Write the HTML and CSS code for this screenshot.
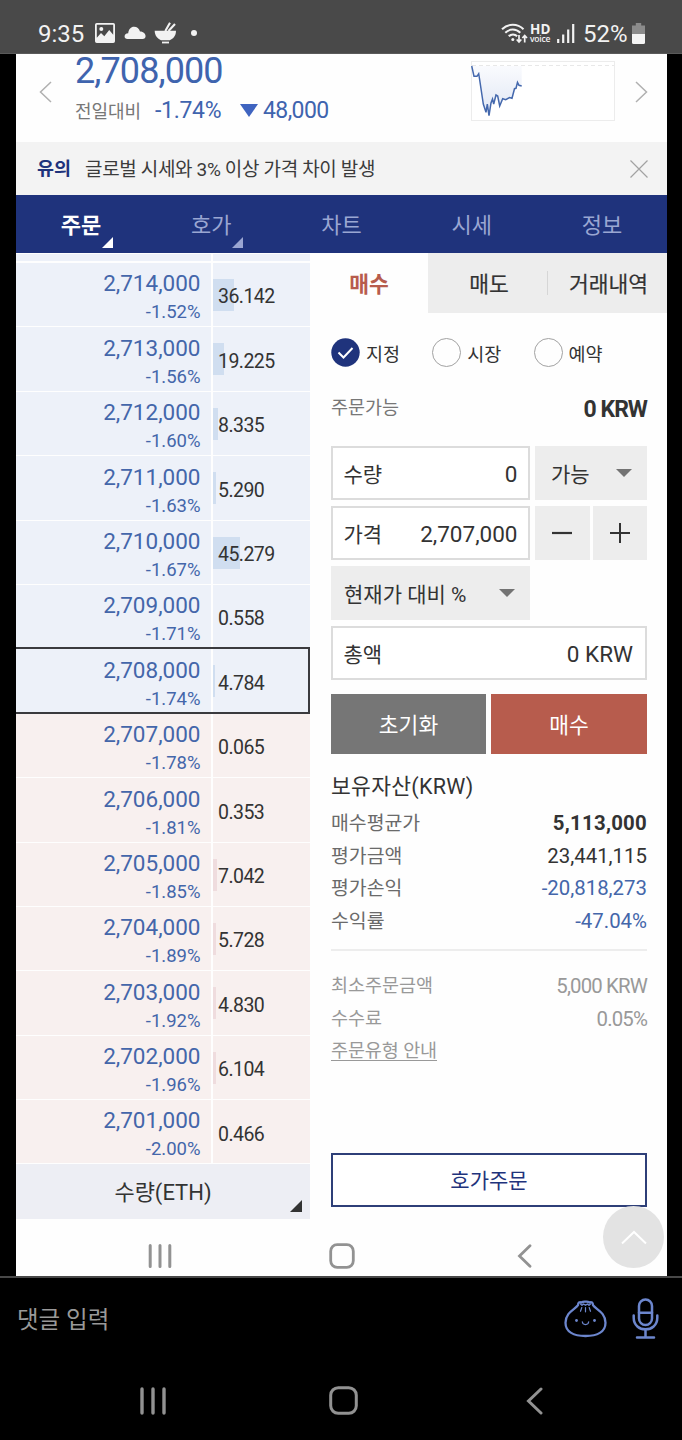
FILE: index.html
```
<!DOCTYPE html>
<html lang="ko">
<head>
<meta charset="utf-8">
<title>주문</title>
<link rel="stylesheet" href="styles.css">
</head>
<body>
<header class="status">
  <span class="clock">9:35</span>
  <svg class="ic-photo" width="20" height="20" viewBox="0 0 20 20"><path fill-rule="evenodd" d="M1.800 0h16.400A1.800 1.800 0 0 1 20 1.800v16.400a1.800 1.800 0 0 1-1.800 1.800H1.800A1.800 1.800 0 0 1 0 18.200V1.800A1.800 1.800 0 0 1 1.800 0zM1.800 1.800v13L6 10l3.300 3.200L14.200 7l4 4.800v-10z" fill="#f2f2f2"/><circle cx="6.300" cy="6" r="2" fill="#f2f2f2"/></svg>
  <svg class="ic-cloud" width="22" height="14" viewBox="0 0 22 14"><path d="M3.500 13C-.500 13-.500 7.600 4.200 7.300 4.700 3 7 .8 10 .8c3 0 5.200 1.600 6 4.700 6.200 0 7.500 7.500 2.500 7.500z" fill="#f2f2f2"/></svg>
  <svg class="ic-bowl" width="23" height="22" viewBox="0 0 23 22"><path d="M.700 8.800H22c0 5-2.800 8-6.200 9.500H7C3.500 16.800.700 13.500.700 8.800z" fill="#f2f2f2"/><path d="M8 20.500h7" stroke="#f2f2f2" stroke-width="1.800"/><path d="M11.300 9 16 .700M14.500 9l6.500-7" stroke="#f2f2f2" stroke-width="2.100"/></svg>
  <i class="dot"></i>
  <span class="grow"></span>
  <svg class="ic-wifi" width="27" height="21" viewBox="0 0 27 21"><g fill="none" stroke="#f2f2f2" stroke-width="2"><path d="M1 6.200c6-6 15.500-6 21.500 0M4.300 9.800c4.300-4.300 10.700-4.300 15 0M7.800 13.200c2.400-2.400 6-2.400 8.400 0"/><path d="M18 12v7M15.700 16.500l2.300 2.500 2.300-2.500M23.700 19.500v-7M21.400 15l2.300-2.500L26 15" stroke-width="1.700"/></g><circle cx="11.800" cy="16.500" r="1.500" fill="#f2f2f2"/></svg>
  <span class="hd"><b>HD</b><small>voice</small></span>
  <svg class="ic-signal" width="18" height="19" viewBox="0 0 18 19"><path d="M1.200 15v4M6.200 10.500V19M11.200 5.500V19M16.200 0v19" stroke="#f2f2f2" stroke-width="2.200"/></svg>
  <span class="pct52">52%</span>
  <svg class="ic-batt" width="13" height="21" viewBox="0 0 13 21"><path d="M3.800 0h5.400v2.500H13V11H0V2.500h3.800z" fill="#8b8b8b"/><path d="M0 11h13v8.500a1.500 1.500 0 0 1-1.500 1.500h-10A1.500 1.500 0 0 1 0 19.500z" fill="#f4f4f4"/></svg>
</header>

<main class="app">
  <section class="quote">
    <svg class="prev" width="13" height="22" viewBox="0 0 13 22"><path d="M12 1 1.500 11 12 21" fill="none" stroke="#b0b0b0" stroke-width="1.500"/></svg>
    <div class="quote-main">
      <div class="last">2,708,000</div>
      <div class="change"><span class="label">전일대비</span><span class="rate">-1.74%</span><i class="down"></i><span class="diff">48,000</span></div>
    </div>
    <svg class="spark" width="144" height="60" viewBox="0 0 144 60">
      <defs><linearGradient id="fade" x2="0" y2="1"><stop offset="0" stop-color="#fafbfe"/><stop offset="1" stop-color="#dfe6f4"/></linearGradient></defs>
      <rect x=".5" y=".5" width="143" height="59" fill="#fff" stroke="#ececec"/>
      <path d="M.7 5 3 15.300h3l1.700-2.600 1 6.300 3.600 24 2.700 8.300 1.300-8.300L18 54.700 20 42l1.500-4 1.200 5L25 34l1.700 1 2 10 3-7.300 3 1 3.800-2.200 2.500.8 2.500-9.600 1.500-.4 1.500-6 1.500 3 2.700.7V5z" fill="url(#fade)"/>
      <path d="M1 4.500h142" stroke="#e8e8e8" stroke-dasharray="4 3"/>
      <path d="M.7 5 3 15.300h3l1.700-2.600 1 6.300 3.600 24 2.700 8.300 1.300-8.300L18 54.700 20 42l1.500-4 1.200 5L25 34l1.700 1 2 10 3-7.300 3 1 3.800-2.200 2.500.8 2.500-9.600 1.500-.4 1.500-6 1.500 3 2.700.7" fill="none" stroke="#4468ad" stroke-width="1.500"/>
    </svg>
    <svg class="next" width="13" height="22" viewBox="0 0 13 22"><path d="M1 1 11.500 11 1 21" fill="none" stroke="#b0b0b0" stroke-width="1.500"/></svg>
  </section>

  <section class="notice">
    <b>유의</b><span>글로벌 시세와 3% 이상 가격 차이 발생</span>
    <svg width="18" height="18" viewBox="0 0 18 18"><path d="m.5.5 17 17m0-17-17 17" stroke="#a2a2a2" stroke-width="1.200"/></svg>
  </section>

  <nav class="tabs">
    <a class="on has">주문</a><a class="has">호가</a><a>차트</a><a>시세</a><a>정보</a>
  </nav>

  <div class="body">
    <section class="book">
      <div class="row stub"><div></div><div></div></div>
      <div class="row"><div class="p">2,714,000<small>-1.52%</small></div><div class="q"><i style="width:21px"></i><span>36.142</span></div></div>
      <div class="row"><div class="p">2,713,000<small>-1.56%</small></div><div class="q"><i style="width:11px"></i><span>19.225</span></div></div>
      <div class="row"><div class="p">2,712,000<small>-1.60%</small></div><div class="q"><i style="width:5px"></i><span>8.335</span></div></div>
      <div class="row"><div class="p">2,711,000<small>-1.63%</small></div><div class="q"><i style="width:3px"></i><span>5.290</span></div></div>
      <div class="row"><div class="p">2,710,000<small>-1.67%</small></div><div class="q"><i style="width:27px"></i><span>45.279</span></div></div>
      <div class="row"><div class="p">2,709,000<small>-1.71%</small></div><div class="q"><span>0.558</span></div></div>
      <div class="row current"><div class="p">2,708,000<small>-1.74%</small></div><div class="q"><i style="width:2px"></i><span>4.784</span></div></div>
      <div class="row bid"><div class="p">2,707,000<small>-1.78%</small></div><div class="q"><span>0.065</span></div></div>
      <div class="row bid"><div class="p">2,706,000<small>-1.81%</small></div><div class="q"><span>0.353</span></div></div>
      <div class="row bid"><div class="p">2,705,000<small>-1.85%</small></div><div class="q"><i style="width:4px"></i><span>7.042</span></div></div>
      <div class="row bid"><div class="p">2,704,000<small>-1.89%</small></div><div class="q"><i style="width:3px"></i><span>5.728</span></div></div>
      <div class="row bid"><div class="p">2,703,000<small>-1.92%</small></div><div class="q"><i style="width:3px"></i><span>4.830</span></div></div>
      <div class="row bid"><div class="p">2,702,000<small>-1.96%</small></div><div class="q"><i style="width:3px"></i><span>6.104</span></div></div>
      <div class="row bid"><div class="p">2,701,000<small>-2.00%</small></div><div class="q"><span>0.466</span></div></div>
      <div class="unit">수량(ETH)</div>
    </section>

    <section class="order">
      <div class="sides"><a class="on">매수</a><a class="sell">매도</a><a>거래내역</a></div>
      <div class="form">
        <div class="types">
          <label><svg width="29" height="29" viewBox="0 0 29 29"><circle cx="14.500" cy="14.500" r="14.200" fill="#1f337c"/><path d="m7.500 14.500 5 5 9-9.500" fill="none" stroke="#fff" stroke-width="2"/></svg>지정</label>
          <label><i></i>시장</label>
          <label><i></i>예약</label>
        </div>
        <div class="avail"><span>주문가능</span><b>0 KRW</b></div>
        <div class="grid">
          <div class="field"><span>수량</span><span class="v">0</span></div>
          <div class="pick short"><span>가능</span><i></i></div>
          <div class="field"><span>가격</span><span class="v">2,707,000</span></div>
          <div class="step"><button><svg width="20" height="20"><path d="M0 10h20" stroke="#333" stroke-width="2.200"/></svg></button><button><svg width="20" height="20"><path d="M0 10h20M10 0v20" stroke="#333" stroke-width="2"/></svg></button></div>
          <div class="pick long"><span>현재가 대비 %</span><i></i></div>
          <div class="field total"><span>총액</span><span class="v">0 KRW</span></div>
        </div>
        <div class="actions"><button class="reset">초기화</button><button class="buy">매수</button></div>
        <h2>보유자산(KRW)</h2>
        <dl class="assets">
          <dt>매수평균가</dt><dd class="strong">5,113,000</dd>
          <dt>평가금액</dt><dd>23,441,115</dd>
          <dt>평가손익</dt><dd class="blue">-20,818,273</dd>
          <dt>수익률</dt><dd class="blue">-47.04%</dd>
        </dl>
        <dl class="info">
          <dt>최소주문금액</dt><dd>5,000 KRW</dd>
          <dt>수수료</dt><dd>0.05%</dd>
          <dt><u>주문유형 안내</u></dt><dd></dd>
        </dl>
        <button class="quick">호가주문</button>
      </div>
    </section>
  </div>

  <div class="softkeys">
    <svg width="24" height="24" viewBox="0 0 24 24"><path d="M2.200 1.500v21M12 1.500v21M21.800 1.500v21" stroke="#929292" stroke-width="3" stroke-linecap="round"/></svg>
    <svg class="home" width="26" height="26" viewBox="0 0 26 26"><rect x="1.700" y="1.700" width="22.600" height="22.600" rx="6.500" fill="none" stroke="#929292" stroke-width="2.800"/></svg>
    <svg width="15" height="24" viewBox="0 0 15 24"><path d="M13 1.800 2.500 12 13 22.200" fill="none" stroke="#929292" stroke-width="2.800" stroke-linecap="round"/></svg>
  </div>
  <div class="totop"><svg width="26" height="15" viewBox="0 0 26 15"><path d="M1 13.500 13 2l12 11.500" fill="none" stroke="#fff" stroke-width="2"/></svg></div>
</main>

<footer class="comment">
  <span>댓글 입력</span>
  <svg class="bun" width="43" height="38" viewBox="0 0 43 38"><g fill="none" stroke="#6c86cd" stroke-linecap="round" stroke-linejoin="round"><path d="M14 5.200C14 2.500 15.500 1.800 17.500 2.500 19 1.500 20.300 1.500 21.500 1.700c1.200-.2 2.500-.2 4 .8 2-.7 3.500 0 3.500 2.700 2.500 4 12.500 7 12.500 17.500C41.500 32 33 36 21.500 36S1.500 32 1.500 22.700C1.500 12.200 11.500 9.200 14 5.200z" stroke-width="2.300"/><path d="M16.500 4l1.500 1.200L19.500 4l2 1.200 2-1.200L25 5.200 26.500 4" stroke-width="1.400"/><path d="m17.800 7.500-1.300 3.800M21.500 7.500v4.300M25.200 7.500l1.300 3.800M18.300 21.800c.4 3.700 6 3.700 6.400 0" stroke-width="1.200"/></g><g fill="#6c86cd"><circle cx="12.500" cy="20.500" r="1.400"/><circle cx="30.500" cy="20.500" r="1.400"/></g></svg>
  <svg class="mic" width="27" height="42" viewBox="0 0 27 42"><g fill="none" stroke="#6c86cd" stroke-width="2.500" stroke-linecap="round"><rect x="7" y="1.500" width="13" height="25.500" rx="6.500"/><path d="M7 14.800h13M1.700 17.500v2.300c0 15.400 23.600 15.400 23.600 0v-2.300M13.500 32v7M5 39.500h17"/></g></svg>
</footer>
<div class="systemkeys">
  <svg width="26" height="28" viewBox="0 0 26 28"><path d="M2 2v24M13 2v24M24 2v24" stroke="#929292" stroke-width="3.400" stroke-linecap="round"/></svg>
  <svg class="home" width="29" height="29" viewBox="0 0 29 29"><rect x="1.700" y="1.700" width="25.600" height="25.600" rx="7.500" fill="none" stroke="#929292" stroke-width="3"/></svg>
  <svg width="17" height="28" viewBox="0 0 17 28"><path d="M15 2 2.500 14 15 26" fill="none" stroke="#929292" stroke-width="3" stroke-linecap="round"/></svg>
</div>
</body>
</html>
```
FILE: styles.css
```
* { box-sizing: border-box; }
body {
  margin: 0;
  width: 682px;
  height: 1440px;
  overflow: hidden;
  background: #000;
  color: #333;
  font-family: Roboto, "Noto Sans CJK KR", sans-serif;
}
svg { display: block; flex: none; }
button { border: 0; padding: 0; font: inherit; }

.status {
  display: flex;
  align-items: center;
  height: 54px;
  padding: 13px 38px 0;
  background: #494949;
  border-bottom: 1px solid #5a5a5a;
  color: #f2f2f2;
  font-size: 24px;
  line-height: 28px;
}
.clock { width: 57px; padding-top: 1px; }
.ic-cloud { margin-left: 9px; }
.ic-bowl { margin-left: 8px; }
.dot { width: 6px; height: 6px; margin-left: 14px; border-radius: 50%; background: #f2f2f2; }
.grow { flex: 1; }
.hd { display: flex; flex-direction: column; width: 22px; margin-left: 2px; font-family: "Open Sans", sans-serif; }
.hd b { font-size: 13.5px; line-height: 10px; letter-spacing: .2px; }
.hd small { font-size: 8.5px; font-weight: 600; line-height: 9px; letter-spacing: -.2px; }
.ic-signal { margin-left: 5px; }
.pct52 { margin-left: 8px; width: 49px; padding-top: 1px; }
.ic-batt { margin-right: -1px; }

.app {
  position: relative;
  width: 651px;
  height: 1222px;
  margin-left: 16px;
  background: #fefefe;
}
.quote { display: flex; height: 88px; padding: 0 19px 0 23px; }
.prev, .next { margin-top: 27px; }
.quote-main { width: 397px; margin-left: 23px; color: #3f64ae; }
.last { font-size: 36px; line-height: 36px; letter-spacing: -.9px; margin-top: -1px; }
.change { display: flex; align-items: center; height: 28px; margin-top: 7px; font-size: 23px; letter-spacing: -.3px; }
.label { width: 80px; font-size: 18px; color: #777; letter-spacing: -.1px; padding-bottom: 1px; }
.rate { width: 85px; }
.down { border: 9px solid transparent; border-top: 13px solid #3f64c0; border-bottom: 0; }
.diff { margin-left: 5px; letter-spacing: -.6px; }
.spark { margin-top: 7px; }
.next { margin-left: 20px; }

.notice { display: flex; align-items: center; height: 53px; padding: 0 19px 0 21px; background: #f3f3f3; font-size: 19px; }
.notice b { width: 48px; padding-bottom: 3px; font-size: 18.5px; color: #1f337c; }
.notice span { flex: 1; padding-bottom: 3px; letter-spacing: -.34px; color: #3b3b3b; }

.tabs { display: grid; grid-template-columns: repeat(5, 1fr); height: 58px; background: #1f337c; color: #9aa6d2; font-size: 22px; line-height: 61px; text-align: center; }
.tabs a { position: relative; }
.tabs .on { color: #fff; font-weight: 700; }
.tabs .has::after { content: ""; position: absolute; right: 33px; bottom: 8px; border-left: 11px solid transparent; border-bottom: 11px solid currentColor; }

.body { display: flex; height: 966px; }
.book { width: 294px; padding-top: 1px; }
.row { display: grid; grid-template-columns: 195px 97px; gap: 2px; height: 64.4px; padding-bottom: 2px; }
.row > div { background: #edf1f9; }
.row.bid > div { background: #f8f0ef; }
.row.stub { height: 9px; }
.p { padding: 6.4px 10.5px 0 0; color: #4466aa; font-size: 22.5px; line-height: 29px; text-align: right; }
.p small { display: block; font-size: 18.5px; line-height: 28px; }
.q { display: flex; position: relative; align-items: center; padding: 4.5px 0 0 5px; font-size: 19.5px; letter-spacing: -.55px; }
.q i { position: absolute; left: 0; top: 16px; height: 32px; background: #d0def0; }
.q span { position: relative; }
.bid .q i { background: #efdcde; }
.current { position: relative; }
.current::after { content: ""; position: absolute; inset: -2px 0 0; border: 2px solid #3a3a3e; border-left: 0; }
.unit { position: relative; height: 55px; background: #edeef4; font-size: 22px; line-height: 58px; text-align: center; }
.unit::after { content: ""; position: absolute; right: 8px; bottom: 7px; border-left: 12px solid transparent; border-bottom: 12px solid #333; }

.order { width: 357px; }
.sides { display: grid; grid-template-columns: 118px 120px 119px; height: 60px; background: #ededed; font-size: 21.5px; line-height: 63px; text-align: center; }
.sides .on { background: #fefefe; color: #b75c4d; font-weight: 700; }
.sides a { position: relative; white-space: nowrap; }
.sides a + a { -webkit-text-stroke: .2px #333; padding-left: 2px; }
.sides .sell::after { content: ""; position: absolute; right: 0; top: 18px; height: 24px; border-right: 1px solid #d6d6d6; }
.form { padding: 25px 20px 0 21px; }
.types { display: grid; grid-template-columns: repeat(3, 101.300px); height: 29px; font-size: 18.5px; }
.types label { display: flex; align-items: center; gap: 6px; white-space: nowrap; }
.types i { width: 29px; height: 29px; border: 1.500px solid #a2a2a2; border-radius: 50%; }
.avail { display: flex; justify-content: space-between; align-items: center; height: 28px; margin-top: 28px; font-size: 18.5px; color: #777; }
.avail span { position: relative; top: -3px; }
.avail b { font-size: 23px; letter-spacing: -1px; color: #333; }
.grid { display: grid; grid-template-columns: 199px 112px; grid-auto-rows: 54px; gap: 6px 5px; margin-top: 23px; font-size: 21px; }
.field { display: flex; justify-content: space-between; align-items: center; border: 2px solid #dcdcdc; padding: 0 10.500px; background: #fff; }
.v { font-size: 22.5px; padding-top: 1px; }
.pick { display: flex; justify-content: space-between; align-items: center; padding: 0 15px 0 16px; background: #ededed; }
.pick i { border: 8px solid transparent; border-top-color: #737373; border-bottom: 0; }
.step { display: grid; grid-template-columns: 1fr 1fr; gap: 3px; }
.step button { display: flex; align-items: center; justify-content: center; background: #ededed; }
.long { padding: 0 15px 0 13px; }
.total { grid-column: 1 / 3; padding-right: 12px; }
.actions { display: grid; grid-template-columns: 155px 156px; gap: 5px; height: 60px; margin-top: 14px; font-size: 21.500px; }
.actions button { color: #fff; padding-bottom: 2px; }
.reset { background: #767676; }
.buy { background: #b75c4d; }
h2 { margin: 19px 0 0; font-size: 21.500px; line-height: 28px; font-weight: 400; letter-spacing: .3px; }
dl { display: grid; grid-template-columns: auto auto; justify-content: space-between; grid-auto-rows: 32.600px; margin: 0; line-height: 33px; font-size: 19.400px; }
dt { color: #6a6a6a; }
dd { margin: 0; text-align: right; font-size: 20.400px; line-height: 32px; }
.assets { margin-top: 6px; height: 144px; border-bottom: 2px solid #ededed; }
.strong { font-weight: 700; letter-spacing: .25px; }
.blue { color: #4466aa; }
.info { margin-top: 19px; height: 98px; color: #999; }
.info dt { color: #999; font-size: 18.500px; }
.info dd { letter-spacing: -.85px; }
.info u { text-underline-offset: 3px; letter-spacing: -.1px; }
.quick { display: block; width: 316px; height: 54px; margin-top: 85px; padding-bottom: 2px; border: 2px solid #2e3f78; background: #fff; color: #1f337c; font-size: 21px; }

.softkeys { display: flex; align-items: center; justify-content: space-between; height: 57px; padding: 17px 135px 0 132px; }
.home { margin-right: 5px; }
.totop { display: flex; align-items: center; justify-content: center; position: absolute; right: 3px; bottom: 8px; width: 61px; height: 62px; border-radius: 50%; background: #e3e3e3; }

.comment { display: flex; align-items: center; height: 85px; padding: 0 23px 0 17px; border-top: 2px solid #484848; color: #999; font-size: 23.500px; }
.comment span { flex: 1; padding-bottom: 3px; }
.bun { margin-top: -1px; }
.mic { margin-left: 25px; margin-top: -2px; }
.systemkeys { display: flex; align-items: center; justify-content: space-between; height: 79px; padding: 0 139px 0 140px; }
```
